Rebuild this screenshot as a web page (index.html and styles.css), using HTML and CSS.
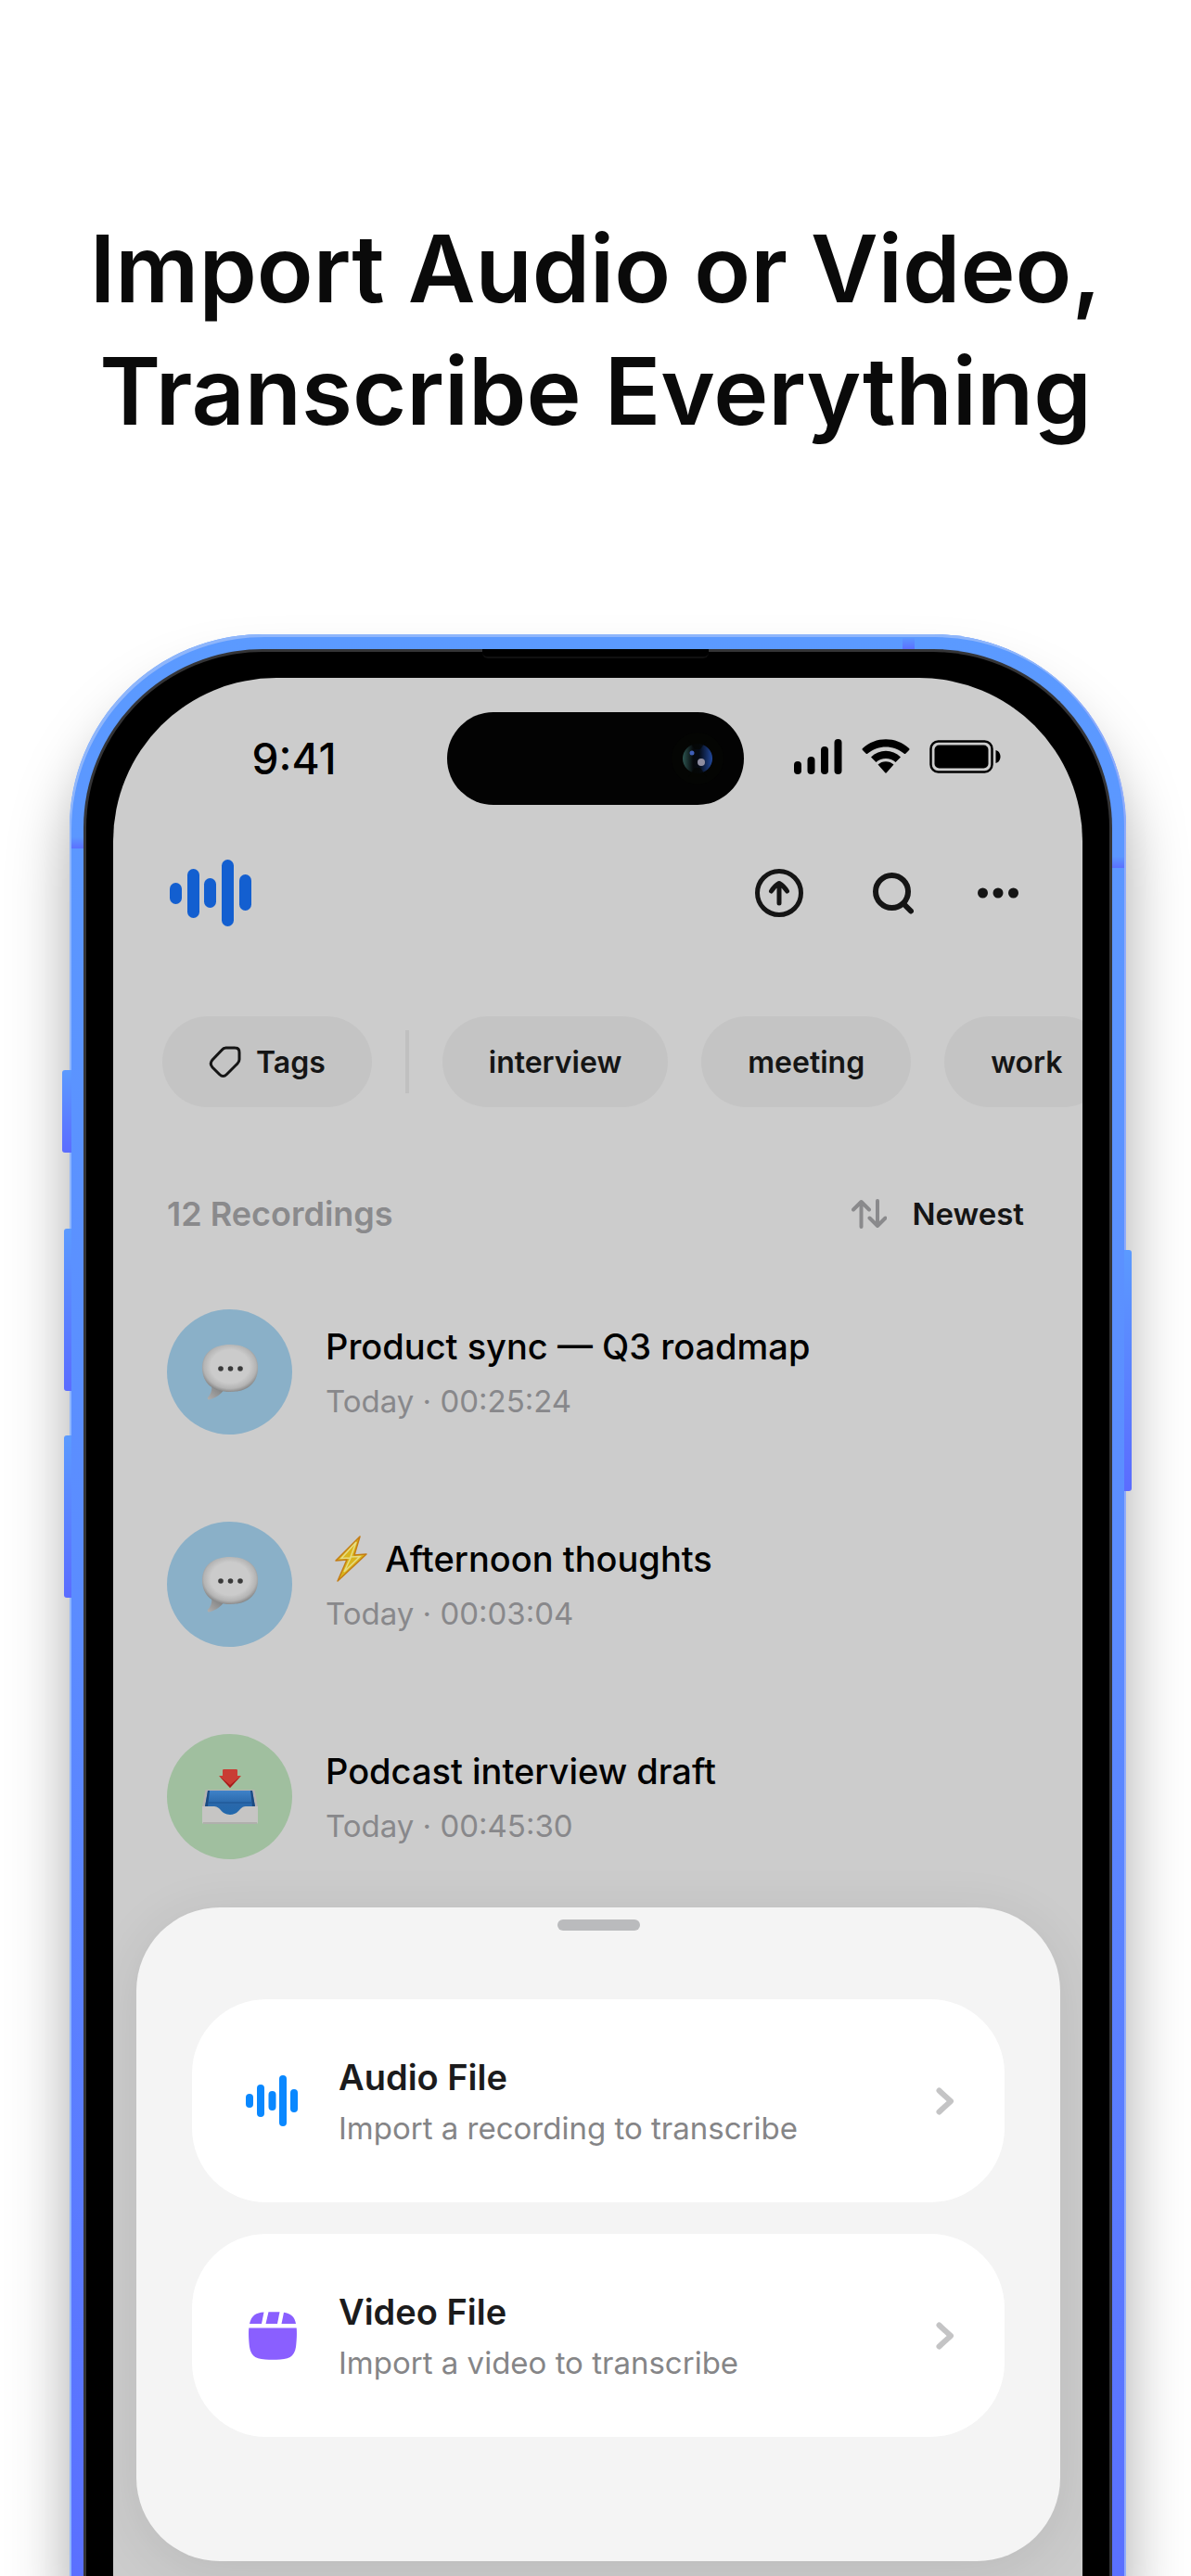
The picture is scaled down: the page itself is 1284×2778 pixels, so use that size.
FILE: index.html
```html
<!DOCTYPE html>
<html lang="en">
<head>
<meta charset="utf-8">
<meta name="viewport" content="width=device-width, initial-scale=1">
<title>Import Audio or Video</title>
<link rel="stylesheet" href="styles.css">
</head>
<body>
<svg class="defs" width="0" height="0" aria-hidden="true">
  <defs>
    <radialGradient id="bubbleFill" cx="50%" cy="46%" r="56%">
      <stop offset="0.62" stop-color="#cbcbcb"/><stop offset="0.84" stop-color="#b4b4b4"/><stop offset="1" stop-color="#808080"/>
    </radialGradient>
    <linearGradient id="tailFill" x1="0" y1="1" x2="1" y2="0">
      <stop offset="0" stop-color="#b0b0b0"/><stop offset="1" stop-color="#747474"/>
    </linearGradient>
    <linearGradient id="trayFill" x1="0" y1="0" x2="0" y2="1">
      <stop offset="0" stop-color="#3f82c8"/><stop offset="0.5" stop-color="#2a68ab"/><stop offset="1" stop-color="#2169ad"/>
    </linearGradient>
    <symbol id="wave" viewBox="0 0 88 72">
      <rect x="0" y="25" width="13" height="23" rx="6.5"/><rect x="19" y="10" width="13" height="53" rx="6.5"/><rect x="37" y="20" width="13" height="32" rx="6.5"/><rect x="56" y="0" width="13" height="72" rx="6.5"/><rect x="75" y="16" width="13" height="39" rx="6.5"/>
    </symbol>
    <symbol id="bubble" viewBox="0 0 60 60">
      <path d="M10 43 C11 50 9 54 6 57 C5 59 7 60 9 59 C15 57 20 54 24 48Z" fill="url(#tailFill)"/>
      <path d="M30 0C48 0 60 9 60 25C60 42 48 51 30 51C12 51 0 42 0 25C0 9 12 0 30 0Z" fill="url(#bubbleFill)"/>
      <g fill="#3a3a3a"><circle cx="20" cy="26" r="2.8"/><circle cx="30.500" cy="26" r="2.800"/><circle cx="41" cy="26" r="2.800"/></g>
    </symbol>
    <symbol id="inbox" viewBox="0 0 60 60">
      <path d="M3.500 22H56.500L60 41H0Z" fill="#b5b4b1"/>
      <path d="M6 23H54L57 41H50V51H10V41H3Z" fill="url(#trayFill)"/>
      <path d="M6 23L8 23L6 40H3Z M54 23H52L54 40H57Z" fill="#1c4a80"/>
      <path d="M7 36H53" stroke="#1d5590" stroke-width="1" fill="none"/>
      <path d="M0 40H13C20 40 20 49 30 49C40 49 40 40 47 40H60V57Q60 59 58 59H2Q0 59 0 57Z" fill="#c6c5c4"/>
      <path d="M1 58H59" stroke="#a9a8a6" stroke-width="1.500"/>
      <path d="M22 1Q22 0 23.500 0H36.500Q38 0 38 1V7H42L30 20L18 7H22Z" fill="#c93d34"/>
      <path d="M19 8L30 20L41 8L30 17Z" fill="#a51c1c"/>
    </symbol>
    <symbol id="chevron" viewBox="0 0 20 30">
      <path d="M3.500 3.500L16 15L3.500 26.500" fill="none" stroke="#c4c4c5" stroke-width="6" stroke-linecap="round" stroke-linejoin="round"/>
    </symbol>
  </defs>
</svg>

<main class="page">
  <h1 class="headline">Import Audio or Video,<br>Transcribe Everything</h1>

  <div class="phone">
    <span class="key key-action"></span>
    <span class="key key-up"></span>
    <span class="key key-down"></span>
    <span class="key key-power"></span>
    <span class="seam seam-left"></span>
    <span class="seam seam-right"></span>
    <span class="seam seam-top"></span>
    <div class="bezel">
      <span class="speaker"></span>
      <div class="screen">
        <div class="status">
          <time class="clock">9:41</time>
          <div class="island">
            <svg width="60" height="60" viewBox="0 0 60 60" aria-hidden="true">
              <defs><linearGradient id="lens"><stop offset="0" stop-color="#2d5550"/><stop offset="0.35" stop-color="#06090c"/><stop offset="0.55" stop-color="#040a14"/><stop offset="1" stop-color="#21489c"/></linearGradient></defs>
              <circle cx="30" cy="30" r="28" fill="#040503"/>
              <circle cx="30" cy="30" r="16" fill="url(#lens)"/>
              <path d="M20 10H40L33 20H27Z M20 50H40L33 40H27Z" fill="#040503" opacity="0.7"/>
              <circle cx="24" cy="24" r="2.500" fill="#3f5fb8"/><circle cx="34" cy="34" r="4" fill="#8f8da0"/>
            </svg>
          </div>
          <div class="indicators">
            <svg width="52" height="38" viewBox="0 0 52 38" aria-hidden="true"><rect x="0" y="24" width="8" height="14" rx="4"/><rect x="14.500" y="19" width="8" height="19" rx="4"/><rect x="29" y="8" width="8" height="30" rx="4"/><rect x="43.500" y="0" width="8" height="38" rx="4"/></svg>
            <svg width="52" height="38" viewBox="0 0 52 38" aria-hidden="true"><path d="M1 10C15-3 37-3 51 10Q52 11 51 12L47.500 15.500Q46.500 16.500 45.500 15.500C34 6 18 6 6.500 15.500Q5.500 16.500 4.500 15.500L1 12Q0 11 1 10Z"/><path d="M10 19.500C19 10.500 33 10.500 42 19.500L36.500 25C31 19.500 21 19.500 15.500 25Z"/><path d="M17.500 27.500C22 23 30 23 34.500 27.500L27 36Q26 37.500 25 36Z"/></svg>
            <svg width="78" height="36" viewBox="0 0 78 36" aria-hidden="true"><rect x="1.500" y="1.500" width="66" height="33" rx="8" fill="none" stroke="#000" stroke-width="2.500"/><rect x="5.500" y="5.500" width="58" height="25" rx="5"/><path d="M71.500 11C75 12 76.500 15 76.500 18C76.500 21 75 24 71.500 25Z"/></svg>
          </div>
        </div>

        <nav class="toolbar" aria-label="Recordings">
          <svg class="logo" width="88" height="72"><use href="#wave"/></svg>
          <div class="actions">
            <button class="icon-button" aria-label="Import"><svg width="54" height="54" viewBox="0 0 54 54"><circle cx="27" cy="27" r="23.500"/><path d="M27 38V17M18.500 25C21 21 23.500 18.500 27 16.500C30.500 18.500 33 21 35.500 25"/></svg></button>
            <button class="icon-button" aria-label="Search"><svg class="search" width="54" height="54" viewBox="0 0 54 54"><circle cx="30.500" cy="25.500" r="17.500"/><path d="M43.500 39L51 46.500"/></svg></button>
            <button class="icon-button" aria-label="More"><svg class="dots" width="54" height="54" viewBox="0 0 54 54"><circle cx="10.500" cy="27" r="5.500"/><circle cx="27" cy="27" r="5.500"/><circle cx="43.500" cy="27" r="5.500"/></svg></button>
          </div>
        </nav>

        <div class="chips">
          <button class="chip"><svg width="35" height="35" viewBox="0 0 35 35" aria-hidden="true"><path d="M18.500 2H28Q33 2 33 7V14.500Q33 17 31 19L19.500 30.500Q15.500 34.500 11.500 30.500L4 23Q0.500 19 4 15L14 4.500Q16 2 18.500 2Z"/></svg>Tags</button>
          <span class="divider"></span>
          <button class="chip">interview</button>
          <button class="chip">meeting</button>
          <button class="chip">work</button>
        </div>

        <div class="list-head">
          <h2 class="count">12 Recordings</h2>
          <button class="sort"><svg width="38" height="32" viewBox="0 0 38 32" aria-hidden="true"><path d="M10.500 30V3M2 11.500L10.500 3L19 11.500M28 2V29M19.500 20.500L28 29L36.500 20.500"/></svg>Newest</button>
        </div>

        <ul class="recordings">
          <li class="recording">
            <span class="avatar blue"><svg width="60" height="60"><use href="#bubble"/></svg></span>
            <div class="info"><h3 class="title">Product sync — Q3 roadmap</h3><p class="meta">Today · 00:25:24</p></div>
          </li>
          <li class="recording">
            <span class="avatar blue"><svg width="60" height="60"><use href="#bubble"/></svg></span>
            <div class="info"><h3 class="title"><svg class="bolt" width="52" height="50" viewBox="0 0 52 50" aria-hidden="true"><path d="M37 1L11 27L23 26L13 49L44 20L31 21Z" fill="#d9b51c" stroke="#c47d14" stroke-width="1.500" stroke-linejoin="round"/><path d="M33 7L17 24.500L27 24L20 39L37 22.500L27 23Z" fill="none" stroke="#e6dc84" stroke-width="1.500"/></svg>Afternoon thoughts</h3><p class="meta">Today · 00:03:04</p></div>
          </li>
          <li class="recording">
            <span class="avatar green"><svg width="60" height="60"><use href="#inbox"/></svg></span>
            <div class="info"><h3 class="title">Podcast interview draft</h3><p class="meta">Today · 00:45:30</p></div>
          </li>
        </ul>

        <section class="sheet" aria-label="Import">
          <span class="grabber"></span>
          <button class="option">
            <span class="option-icon"><svg class="audio" width="58" height="55" viewBox="0 0 58 55"><rect x="0" y="20" width="8" height="15" rx="4"/><rect x="12" y="10" width="8" height="35" rx="4"/><rect x="24.500" y="17" width="8" height="21" rx="4"/><rect x="36" y="0" width="8" height="55" rx="4"/><rect x="48" y="15" width="8" height="25" rx="4"/></svg></span>
            <span class="option-text"><span class="option-title">Audio File</span><span class="option-sub">Import a recording to transcribe</span></span>
            <svg width="20" height="30"><use href="#chevron"/></svg>
          </button>
          <button class="option">
            <span class="option-icon"><svg class="video" width="52" height="52" viewBox="0 0 52 52"><path d="M1 13C3 4 8 1 16.500 0.500L14 13Z"/><path d="M21.500 0.300Q27 0 33.500 0.300L31 13H18.500Z"/><path d="M38 0.700C45 1.500 49.500 5 51 13H35.500Z"/><path d="M0.300 17.500H51.700C52.300 24 51.700 32 51 38C49.500 48 44 51 34 51.500Q26 52 18 51.500C8 51 2.500 48 1 38C0.300 32-0.300 24 0.300 17.500Z"/></svg></span>
            <span class="option-text"><span class="option-title">Video File</span><span class="option-sub">Import a video to transcribe</span></span>
            <svg width="20" height="30"><use href="#chevron"/></svg>
          </button>
        </section>
      </div>
    </div>
  </div>
</main>
</body>
</html>
```
FILE: styles.css
```css
* { box-sizing: border-box; }

body {
  margin: 0;
  background: #fff;
  color: #000;
  font-family: Inter, "Liberation Sans", sans-serif;
}

h1, h2, h3, p, ul { margin: 0; padding: 0; }
ul { list-style: none; }

button {
  border: 0;
  margin: 0;
  padding: 0;
  background: none;
  color: inherit;
  font: inherit;
  text-align: left;
}

svg { display: block; flex: none; }

.defs { position: absolute; }

.page {
  display: flex;
  flex-direction: column;
  min-height: 100vh;
  overflow: hidden;
  padding-top: 224px;
}

.headline {
  color: #0a0a0a;
  font-size: 100px;
  font-weight: 600;
  line-height: 132px;
  text-align: center;
  white-space: nowrap;
}

/* Phone body */
.phone {
  position: relative;
  display: flex;
  flex: 1;
  margin: 196px 70px 0 75px;
  padding: 16px 15px 0;
  border-radius: 208px 208px 0 0;
  background: linear-gradient(#5b9aff, #5b8cff 50%, #5a70ff);
  box-shadow: inset 2px 3px 0 #8fb6fb, inset -2px 0 0 #8fabfb, 0 50px 64px rgba(0, 0, 0, 0.34);
}

.key {
  position: absolute;
  left: -6px;
  width: 8px;
  height: 175px;
  border-radius: 3px 0 0 3px;
  background: linear-gradient(#5b9aff, #5b6cff);
}
.key-action { top: 470px; left: -8px; width: 10px; height: 89px; }
.key-up { top: 641px; }
.key-down { top: 864px; }
.key-power { top: 664px; right: -6px; left: auto; height: 260px; border-radius: 0 3px 3px 0; }

.seam {
  position: absolute;
  width: 13px;
  height: 12px;
  background: linear-gradient(#5b96ff, #5b70ff);
}
.seam-left { top: 219px; left: 2px; }
.seam-right { top: 240px; right: 2px; }
.seam-top { top: 4px; right: 228px; }

.bezel {
  position: relative;
  display: flex;
  flex: 1;
  min-width: 0;
  padding: 28px 29px 0;
  border: 3px solid #343436;
  border-bottom: 0;
  border-radius: 193px 193px 0 0;
  background: #000;
}

.speaker {
  position: absolute;
  top: -3px;
  left: 50%;
  width: 244px;
  height: 10px;
  margin-left: -125px;
  border-bottom: 2px solid #101010;
  border-radius: 0 0 6px 6px;
  background: #000;
}

.screen {
  display: flex;
  flex: 1;
  flex-direction: column;
  min-width: 0;
  overflow: hidden;
  border-radius: 176px 176px 0 0;
  background: #ccc;
}

/* Status bar */
.status {
  display: grid;
  grid-template-columns: 1fr 320px 1fr;
  align-items: center;
  height: 174px;
  padding-right: 6px;
}

.clock {
  padding-right: 119px;
  font-size: 46px;
  font-weight: 500;
  text-align: right;
}

.island {
  display: flex;
  align-items: center;
  justify-content: flex-end;
  height: 100px;
  padding-right: 20px;
  border-radius: 50px;
  background: #030303;
}

.indicators {
  display: flex;
  align-items: center;
  gap: 21px;
  padding: 0 0 4px 54px;
}

/* Toolbar */
.toolbar {
  display: flex;
  align-items: center;
  justify-content: space-between;
  height: 116px;
  padding: 0 64px 0 61px;
}

.logo { fill: #135fd0; }

.actions { display: flex; gap: 64px; }

.icon-button svg {
  fill: none;
  stroke: #151515;
  stroke-width: 5;
  stroke-linecap: round;
  stroke-linejoin: round;
}
.icon-button .search { stroke-width: 6; }
.icon-button .dots { fill: #151515; stroke: none; }

/* Tag filters */
.chips {
  display: flex;
  align-items: center;
  gap: 36px;
  margin-top: 75px;
  padding-left: 53px;
}

.chip {
  display: flex;
  flex: none;
  align-items: center;
  gap: 16px;
  height: 98px;
  padding: 0 50px;
  border-radius: 49px;
  background: #c4c4c4;
  color: #151515;
  font-size: 32px;
  font-weight: 600;
}
.chip svg { fill: none; stroke: #151515; stroke-width: 3; }

.divider { flex: none; width: 4px; height: 68px; background: #c0c0c0; }

/* List */
.list-head {
  display: flex;
  align-items: center;
  justify-content: space-between;
  height: 40px;
  margin-top: 95px;
  padding: 0 63px 0 58px;
}

.count { color: #8a8a8c; font-size: 36px; font-weight: 600; }

.sort {
  display: flex;
  align-items: center;
  gap: 27px;
  color: #151515;
  font-size: 33px;
  font-weight: 600;
}
.sort svg { fill: none; stroke: #8a8a8c; stroke-width: 4; stroke-linecap: round; stroke-linejoin: round; }

.recordings {
  display: flex;
  flex-direction: column;
  gap: 94px;
  margin-top: 83px;
  padding: 0 58px;
}

.recording { display: flex; align-items: center; gap: 36px; }

.avatar {
  display: grid;
  flex: none;
  place-items: center;
  width: 135px;
  height: 135px;
  border-radius: 50%;
}
.blue { background: #8ab0c8; }
.green { background: #a0bf9f; }

.info { padding-top: 4px; }

.title {
  display: flex;
  align-items: center;
  gap: 12px;
  font-size: 38px;
  font-weight: 500;
  line-height: 59px;
}

.meta { color: #88888b; font-size: 33px; line-height: 59px; }

/* Import sheet */
.sheet {
  display: flex;
  flex-direction: column;
  gap: 34px;
  margin: auto 24px 16px 25px;
  padding: 13px 60px 134px;
  border-radius: 90px;
  background: #f4f4f4;
  box-shadow: 0 10px 60px rgba(0, 0, 0, 0.09);
}

.grabber {
  align-self: center;
  width: 89px;
  height: 12px;
  margin-bottom: 40px;
  border-radius: 6px;
  background: #babbbd;
}

.option {
  display: flex;
  align-items: center;
  height: 219px;
  padding: 0 54px 0 58px;
  border-radius: 80px;
  background: #fff;
}

.option-icon { flex: none; width: 100px; }
.audio { fill: #0a88ff; }
.video { margin-left: 3px; fill: #8a5fff; }

.option-text { display: flex; flex: 1; flex-direction: column; padding-top: 4px; }
.option-title { color: #1b1b1c; font-size: 38px; font-weight: 600; line-height: 55px; }
.option-sub { color: #858587; font-size: 33px; line-height: 55px; }
```
